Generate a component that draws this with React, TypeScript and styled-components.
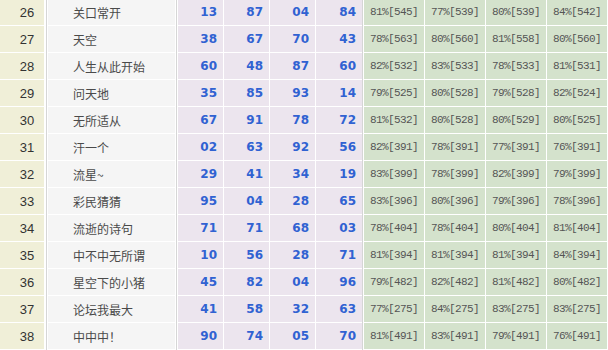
import styled, { createGlobalStyle } from "styled-components";

const GlobalStyle = createGlobalStyle`
  html, body {
    margin: 0;
    padding: 0;
    background: #fff;
    overflow: hidden;
  }
`;

type Entry = {
  id: number;
  name: string;
  nums: string[];
  rates: string[];
};

const rows: Entry[] = [
  { id: 26, name: "关口常开", nums: ["13", "87", "04", "84"], rates: ["81%[545]", "77%[539]", "80%[539]", "84%[542]"] },
  { id: 27, name: "天空", nums: ["38", "67", "70", "43"], rates: ["78%[563]", "80%[560]", "81%[558]", "80%[560]"] },
  { id: 28, name: "人生从此开始", nums: ["60", "48", "87", "60"], rates: ["82%[532]", "83%[533]", "78%[533]", "81%[531]"] },
  { id: 29, name: "问天地", nums: ["35", "85", "93", "14"], rates: ["79%[525]", "80%[528]", "79%[528]", "82%[524]"] },
  { id: 30, name: "无所适从", nums: ["67", "91", "78", "72"], rates: ["81%[532]", "80%[528]", "80%[529]", "80%[525]"] },
  { id: 31, name: "汗一个", nums: ["02", "63", "92", "56"], rates: ["82%[391]", "78%[391]", "77%[391]", "76%[391]"] },
  { id: 32, name: "流星~", nums: ["29", "41", "34", "19"], rates: ["83%[399]", "78%[399]", "82%[399]", "79%[399]"] },
  { id: 33, name: "彩民猜猜", nums: ["95", "04", "28", "65"], rates: ["83%[396]", "80%[396]", "79%[396]", "78%[396]"] },
  { id: 34, name: "流逝的诗句", nums: ["71", "71", "68", "03"], rates: ["78%[404]", "78%[404]", "80%[404]", "81%[404]"] },
  { id: 35, name: "中不中无所谓", nums: ["10", "56", "28", "71"], rates: ["81%[394]", "81%[394]", "81%[394]", "84%[394]"] },
  { id: 36, name: "星空下的小猪", nums: ["45", "82", "04", "96"], rates: ["79%[482]", "82%[482]", "81%[482]", "80%[482]"] },
  { id: 37, name: "论坛我最大", nums: ["41", "58", "32", "63"], rates: ["77%[275]", "84%[275]", "83%[275]", "83%[275]"] },
  { id: 38, name: "中中中！", nums: ["90", "74", "05", "70"], rates: ["81%[491]", "83%[491]", "79%[491]", "76%[491]"] },
];

const Table = styled.div`
  display: flex;
  flex-direction: column;
  width: 608px;
  margin-top: -1px;
`;

const Row = styled.div`
  display: flex;
  height: 27px;
`;

// cells keep 1px of white at the bottom as the row spacing
const Cell = styled.div<{ $w: number; $bg: string }>`
  width: ${(p) => p.$w}px;
  flex: none;
  height: 26px;
  border-bottom: 1px solid #fff;
  background: ${(p) => p.$bg};
  display: flex;
  align-items: center;
  box-sizing: content-box;
`;

const IdCell = styled(Cell)`
  justify-content: center;
  font-family: "Liberation Sans", Arial, sans-serif;
  font-size: 13px;
  color: #333;
  span {
    margin-left: 10px;
  }
`;

const NameCell = styled(Cell)`
  padding-left: 25px;
  width: ${(p) => p.$w - 25}px;
  font-family: "Noto Sans CJK SC", "Liberation Sans", sans-serif;
  font-size: 12px;
  color: #4a4a4a;
`;

const NumCell = styled(Cell)`
  justify-content: flex-end;
  padding-right: 6px;
  width: ${(p) => p.$w - 6}px;
  margin-left: 1px;
  font-family: "DejaVu Sans", Verdana, sans-serif;
  font-weight: bold;
  font-size: 12px;
  color: #3062d2;
  &:first-child {
    margin-left: 0;
  }
`;

const RateCell = styled(Cell)`
  justify-content: center;
  margin-left: 1px;
  font-family: "Liberation Mono", "Courier New", monospace;
  font-size: 11px;
  letter-spacing: -0.6px;
  color: #555;
  &:first-child {
    margin-left: 0;
  }
`;

const Group = styled.div`
  display: flex;
`;

const Sep = styled.div<{ $l: number; $r: number }>`
  flex: none;
  width: 1px;
  background: #d6d6d6;
  margin: 0 ${(p) => p.$r}px 0 ${(p) => p.$l}px;
`;

function App() {
  return (
    <>
      <GlobalStyle />
      <Table>
        {rows.map((r) => (
          <Row key={r.id}>
            <IdCell $w={44} $bg="#f0efd8">
              <span>{r.id}</span>
            </IdCell>
            <Sep $l={2} $r={1} />
            <NameCell $w={127} $bg="#f5f5f5">
              {r.name}
            </NameCell>
            <Sep $l={1} $r={1} />
            <Group>
              {r.nums.map((n, i) => (
                <NumCell key={i} $w={i === 3 ? 46 : 45} $bg="#ece5ee">
                  {n}
                </NumCell>
              ))}
            </Group>
            <Sep $l={0} $r={1} />
            <Group>
              {r.rates.map((t, i) => (
                <RateCell key={i} $w={60} $bg="#d4e2cc">
                  {t}
                </RateCell>
              ))}
            </Group>
            <Sep $l={1} $r={1} />
          </Row>
        ))}
      </Table>
    </>
  );
}

export default App;
